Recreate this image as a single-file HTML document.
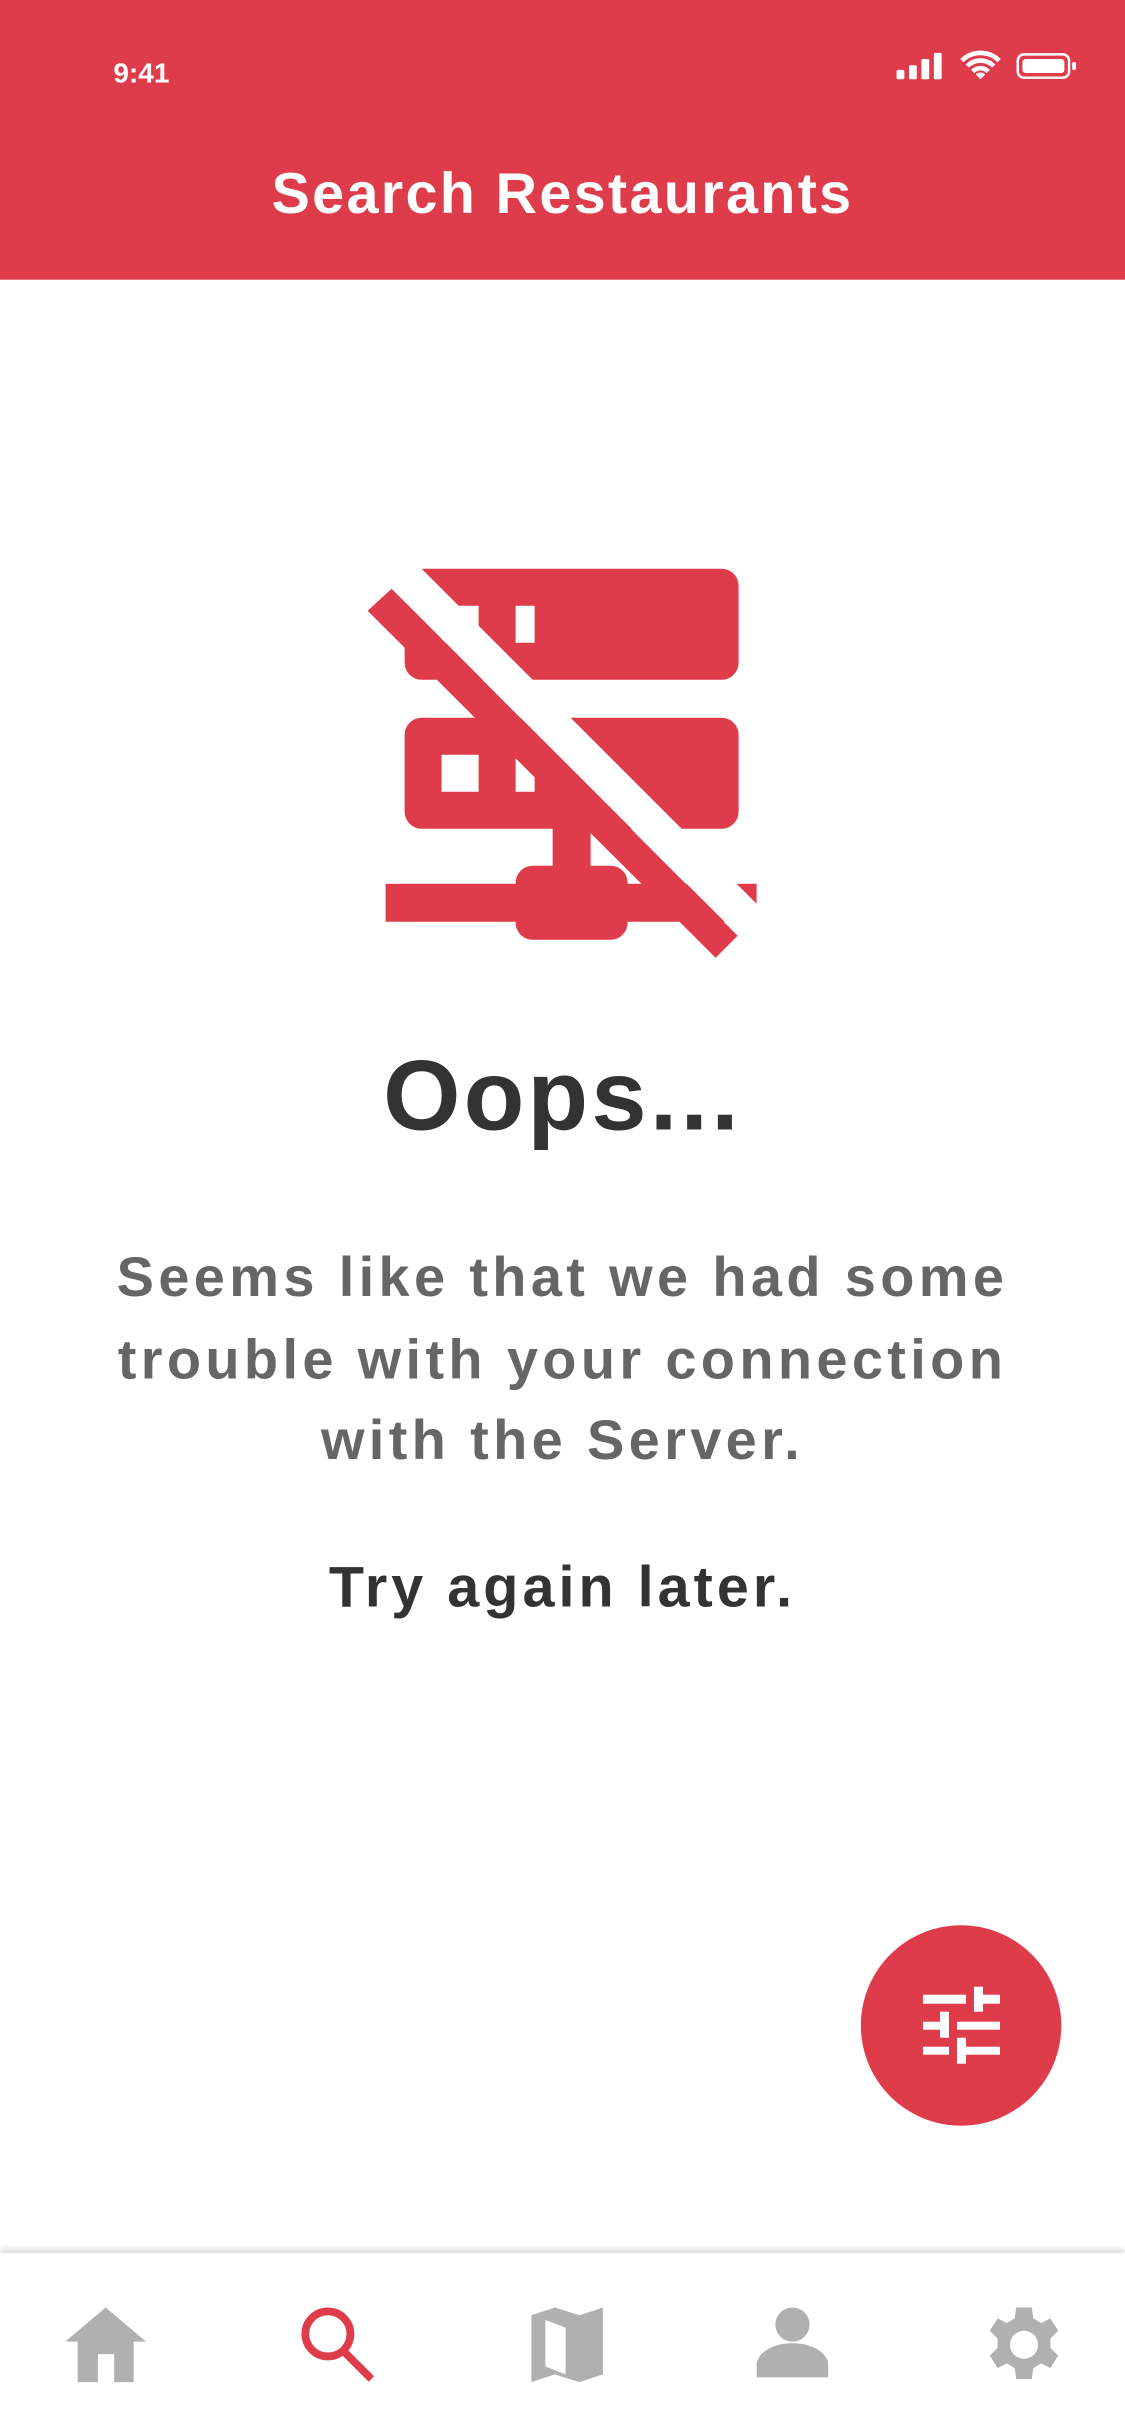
<!DOCTYPE html>
<html><head><meta charset="utf-8"><style>
html,body{margin:0;padding:0;background:#fff;}
body{width:1125px;height:2436px;overflow:hidden;}
#w{position:absolute;left:0;top:0;width:724px;height:1568px;transform:scale(1.55387);transform-origin:0 0;font-family:"Liberation Sans",Arial,sans-serif;}
.hdr{position:absolute;left:0;top:0;width:724px;height:180px;background:#DF3C4B;color:#fff;}
.time{position:absolute;left:73px;top:37px;font-size:18px;font-weight:bold;}
.title{position:absolute;left:0;width:724px;top:104px;text-align:center;font-size:37px;font-weight:bold;letter-spacing:1.5px;}
.c{position:absolute;left:0;width:724px;text-align:center;}
.oops{top:668px;font-size:64px;font-weight:bold;color:#333;letter-spacing:2px;}
.p{top:796px;font-size:36px;line-height:52.5px;font-weight:bold;color:#666;letter-spacing:2.8px;}
.try{top:1001px;font-size:37px;font-weight:bold;color:#333;letter-spacing:2.6px;}
.tab{position:absolute;left:0;top:1450px;width:724px;height:118px;background:#fff;box-shadow:0 -2px 5px rgba(0,0,0,0.18);}
</style></head><body><div id="w">
<div class="hdr">
<div class="time">9:41</div>
<svg style="position:absolute;left:575px;top:32px" width="120" height="20" viewBox="0 0 120 20">
<rect x="2" y="13" width="5" height="6" rx="1" fill="#fff"/><rect x="10" y="10" width="5" height="9" rx="1" fill="#fff"/><rect x="18" y="6" width="5" height="13" rx="1" fill="#fff"/><rect x="26" y="2" width="5" height="17" rx="1" fill="#fff"/>
<path d="M44 7a17 17 0 0 1 24 0M47.5 10.5a12 12 0 0 1 17 0M51 14a7 7 0 0 1 10 0" stroke="#fff" stroke-width="3" fill="none"/><path d="M53 16l3 3 3-3a4 4 0 0 0-6 0z" fill="#fff"/>
<rect x="80" y="3" width="33" height="15" rx="4" fill="none" stroke="#fff" stroke-width="1.6"/><rect x="83" y="6" width="27" height="9" rx="2" fill="#fff"/><rect x="115" y="8" width="2.5" height="5" rx="1" fill="#fff"/>
</svg>
<div class="title">Search Restaurants</div>
</div>
<svg style="position:absolute;left:225.24px;top:347.52px" width="270.3" height="283.2" viewBox="350 540 420 440">
<g fill="#DF3C4B">
<rect x="405" y="568" width="334" height="111" rx="17"/>
<rect x="405" y="717" width="334" height="111" rx="17"/>
<rect x="553" y="820" width="38" height="50"/>
<rect x="386" y="883" width="371" height="38"/>
<rect x="516" y="865" width="112" height="74" rx="17"/>
</g>
<g fill="#fff">
<rect x="442" y="605" width="37" height="37"/><rect x="516" y="605" width="19" height="37"/>
<rect x="442" y="754" width="37" height="37"/><rect x="516" y="754" width="19" height="37"/>
</g>
<polygon points="344,540 394,540 854,1000 804,1000" fill="#fff"/>
<polygon points="368,610 392,588 738,935 716,957" fill="#DF3C4B"/>
</svg>
<div class="c oops">Oops...</div>
<div class="c p">Seems like that we had some<br>trouble with your connection<br>with the Server.</div>
<div class="c try">Try again later.</div>
<div style="position:absolute;left:554px;top:1239px;width:129px;height:129px;border-radius:50%;background:#DF3C4B;"></div>
<svg style="position:absolute;left:547px;top:1229.2px" width="141.6" height="141.6" viewBox="850 1910 220 220" fill="#fff">
<rect x="923" y="1995" width="43" height="9"/><rect x="974" y="1987" width="9" height="25"/><rect x="983" y="1995" width="17" height="9"/>
<rect x="923" y="2022" width="17" height="8"/><rect x="940" y="2012" width="9" height="26"/><rect x="957" y="2022" width="43" height="8"/>
<rect x="923" y="2047" width="26" height="8"/><rect x="957" y="2038" width="9" height="26"/><rect x="966" y="2047" width="34" height="8"/>
</svg>
<div class="tab"></div>
<svg style="position:absolute;left:0;top:1450px" width="724" height="118" viewBox="0 1450 724 118">
<g fill="#B0B0B0">
<path d="M68 1485L94 1507H86V1533H73.5V1515H63V1533H50V1507H42Z"/>
<path d="M342 1490L357 1485L373 1490L388 1485V1528L373 1533L357 1528L342 1533ZM351 1493V1523L364 1528V1498Z" fill-rule="evenodd"/>
<circle cx="510" cy="1496" r="11"/>
<path d="M487 1530V1522A23 14 0 0 1 533 1522V1530Z"/>
<path fill-rule="evenodd" d="M654 1485h10l1 7 5 3 6-3 5 8-5 5v6l5 5-5 8-6-3-5 3-1 7h-10l-1-7-5-3-6 3-5-8 5-5v-6l-5-5 5-8 6 3 5-3zM659 1500a9 9 0 1 0 0.01 0z"/>
</g>
<circle cx="211" cy="1502" r="14.5" fill="none" stroke="#DF3C4B" stroke-width="5"/>
<line x1="221" y1="1513" x2="239" y2="1531" stroke="#DF3C4B" stroke-width="5"/>
</svg>
</div></body></html>
